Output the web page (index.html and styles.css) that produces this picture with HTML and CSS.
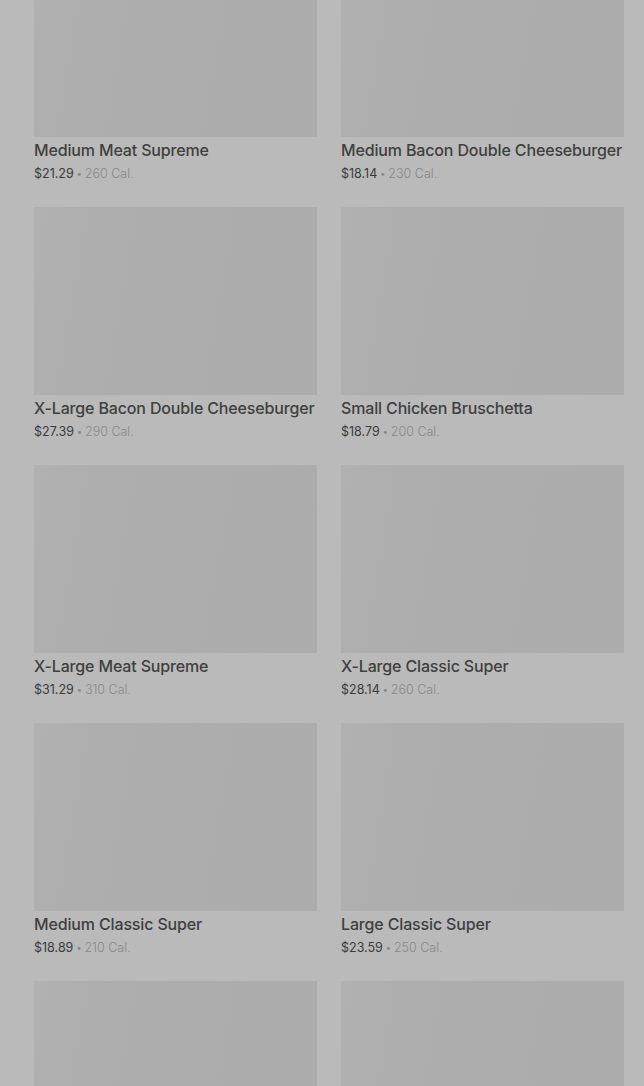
FILE: index.html
```html
<!DOCTYPE html>
<html lang="en">
<head>
<meta charset="utf-8">
<title>Menu</title>
<link rel="stylesheet" href="styles.css">
</head>
<body>
<div class="page">
  <div class="grid">
    <div class="item"><div class="thumb"></div><div class="name">Medium Meat Supreme</div><div class="meta"><span class="price">$21.29</span><span class="dot">•</span><span class="cal">260 Cal.</span></div></div>
    <div class="item"><div class="thumb"></div><div class="name">Medium Bacon Double Cheeseburger</div><div class="meta"><span class="price">$18.14</span><span class="dot">•</span><span class="cal">230 Cal.</span></div></div>
    <div class="item"><div class="thumb"></div><div class="name">X-Large Bacon Double Cheeseburger</div><div class="meta"><span class="price">$27.39</span><span class="dot">•</span><span class="cal">290 Cal.</span></div></div>
    <div class="item"><div class="thumb"></div><div class="name">Small Chicken Bruschetta</div><div class="meta"><span class="price">$18.79</span><span class="dot">•</span><span class="cal">200 Cal.</span></div></div>
    <div class="item"><div class="thumb"></div><div class="name">X-Large Meat Supreme</div><div class="meta"><span class="price">$31.29</span><span class="dot">•</span><span class="cal">310 Cal.</span></div></div>
    <div class="item"><div class="thumb"></div><div class="name">X-Large Classic Super</div><div class="meta"><span class="price">$28.14</span><span class="dot">•</span><span class="cal">260 Cal.</span></div></div>
    <div class="item"><div class="thumb"></div><div class="name">Medium Classic Super</div><div class="meta"><span class="price">$18.89</span><span class="dot">•</span><span class="cal">210 Cal.</span></div></div>
    <div class="item"><div class="thumb"></div><div class="name">Large Classic Super</div><div class="meta"><span class="price">$23.59</span><span class="dot">•</span><span class="cal">250 Cal.</span></div></div>
    <div class="item"><div class="thumb"></div></div>
    <div class="item"><div class="thumb"></div></div>
  </div>
</div>
</body>
</html>
```
FILE: styles.css
```css
html, body {
  margin: 0;
  padding: 0;
  background: #bababa;
  overflow: hidden;
}
body {
  font-family: Inter, "Noto Sans", "Liberation Sans", sans-serif;
  color: #3d3d3d;
}
.page {
  height: 1086px;
  overflow: hidden;
  padding: 0 20px 0 34px;
}
.grid {
  display: grid;
  grid-template-columns: 283px 283px;
  column-gap: 24px;
  row-gap: 23px;
  margin-top: -51px;
}
.thumb {
  height: 188px;
  background: linear-gradient(100deg, #b1b1b1 0%, #aeaeae 18%, #adadad 40%, #acacac 100%);
}
.name {
  margin-top: 1px;
  font-size: 16px;
  line-height: 24px;
  font-weight: 500;
  letter-spacing: -0.15px;
  color: #3f3f3f;
  white-space: nowrap;
}
.meta {
  margin-top: 2px;
  font-size: 12.5px;
  line-height: 20px;
  letter-spacing: 0;
  white-space: nowrap;
}
.price {
  color: #3a3a3a;
}
.dot {
  color: #868686;
  font-size: 9px;
  margin: 0 3px 0 3px;
  vertical-align: 1px;
}
.cal {
  color: #888888;
  font-weight: 300;
}
```
